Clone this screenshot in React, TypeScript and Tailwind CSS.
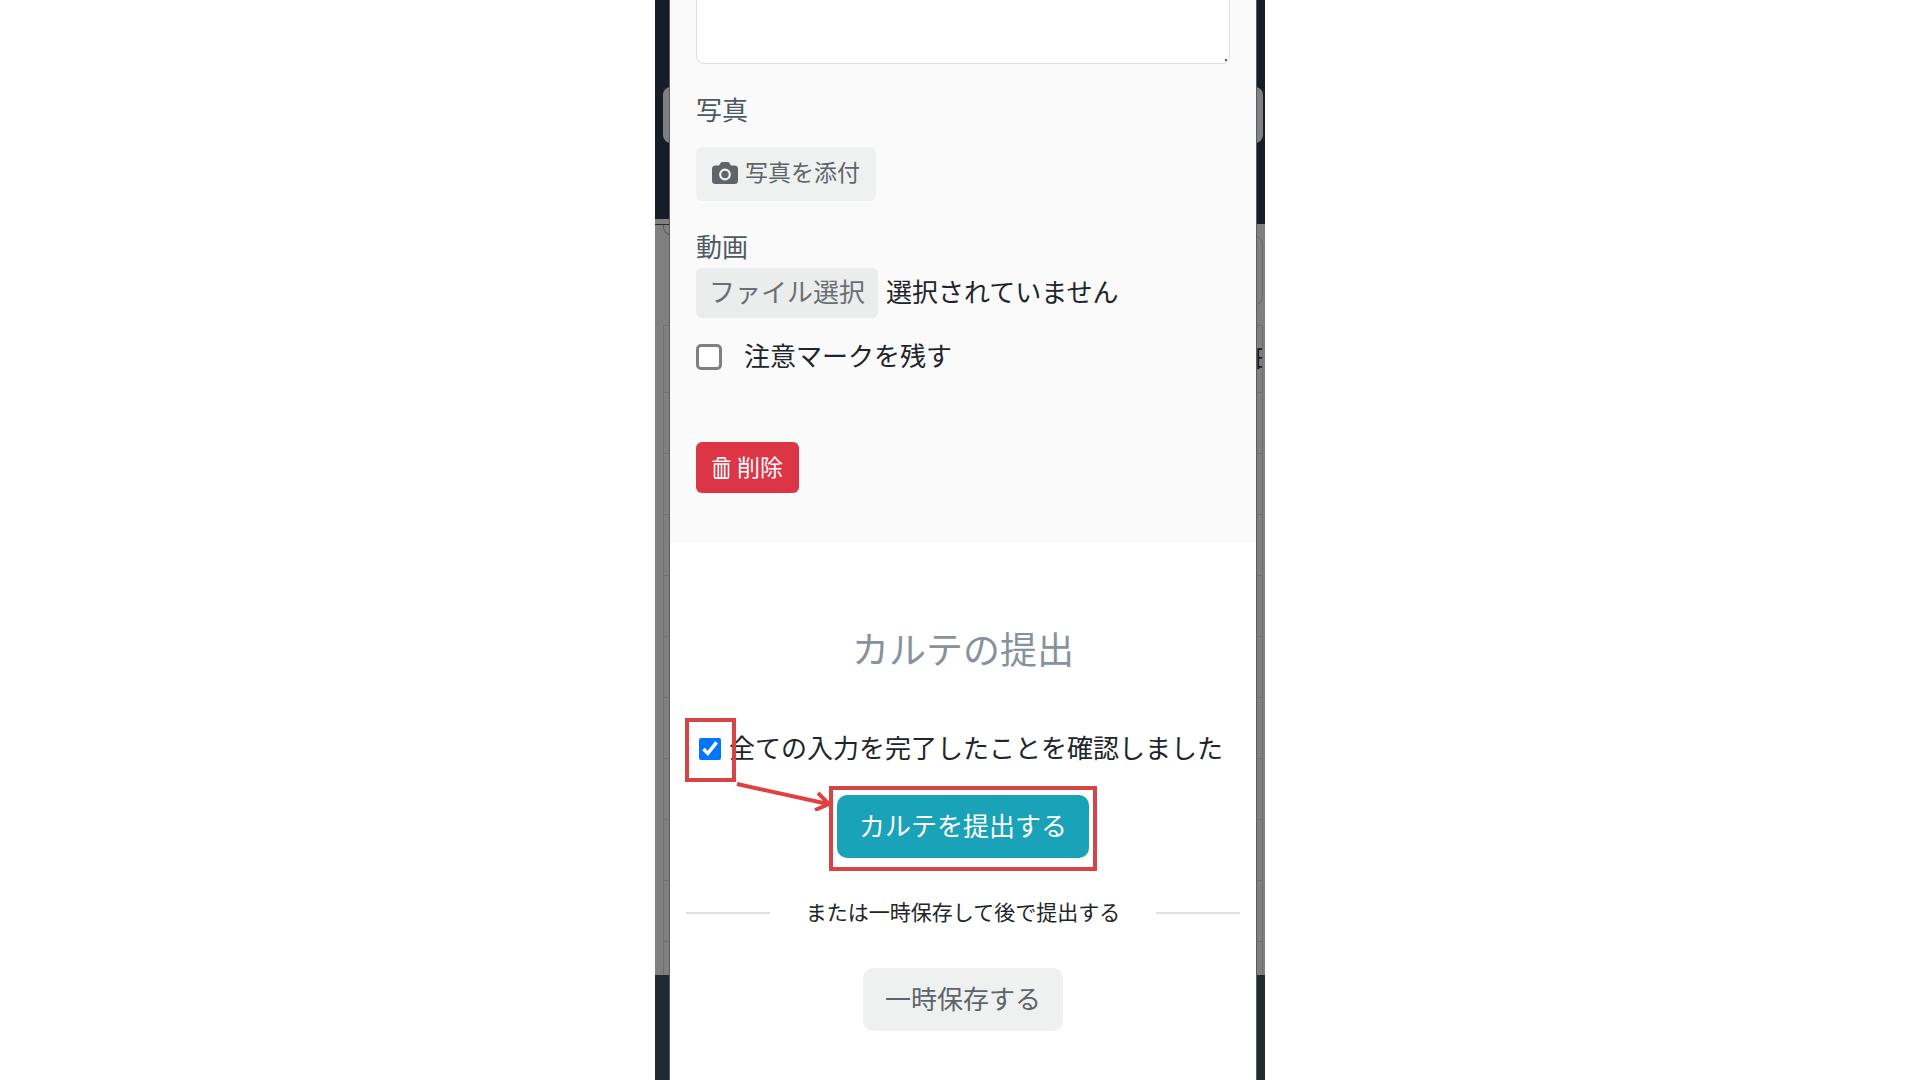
// カルテ提出モーダル (写真・動画添付 → 確認 → 提出)
import { useState } from 'react';
import type { ReactNode } from 'react';

const ROWS = ['日', '', '', '', '', '', '', '', '', ''];

// モーダルの後ろに見える暗転したページ
function DimmedPage() {
  return (
    <div aria-hidden="true" className="absolute inset-0 flex flex-col overflow-hidden bg-[#808080]">
      <div className="flex h-[224px] shrink-0 flex-col justify-between bg-[#161d29] pt-[87px]">
        <div className="ml-2 mr-[2px] h-14 rounded-lg bg-[#808084]" />
        <div className="h-[5px] w-1/2 bg-[#808080]" />
      </div>
      <div className="h-[751px] shrink-0 pr-[2px]">
        <div className="flex h-[101px]">
          <div className="w-1/2 border-t border-[#2a2a2a] pl-2">
            <div className="h-[10px] rounded-bl-lg border-b border-l border-[#5a5a5a]" />
          </div>
          <div className="mt-3 h-[69px] w-1/2 rounded-r-lg border border-[#6c6c6c]" />
        </div>
        <div className="ml-2 h-[650px] border border-b-0 border-[#6f6f6f]">
          {ROWS.map((label, i) => (
            <div key={i} className="flex h-[61px] items-center justify-end border-b border-[#6f6f6f] first:h-[67px]">
              <span className="w-[9px] overflow-hidden text-2xl text-[#1c1c1c]">{label}</span>
            </div>
          ))}
        </div>
      </div>
      <div className="grow bg-[#1f2a32]" />
    </div>
  );
}

function CameraIcon() {
  return (
    <svg viewBox="0 0 26 22" className="h-[22px] w-[26px]" fill="none" aria-hidden="true">
      <path
        d="M3.5 3.5h3.6l1.300-2.200A2.400 2.400 0 0 1 10.500 0h5a2.400 2.400 0 0 1 2.100 1.300l1.300 2.200h3.600A3.500 3.500 0 0 1 26 7v11.500a3.500 3.500 0 0 1-3.500 3.500h-19A3.500 3.500 0 0 1 0 18.500V7a3.500 3.500 0 0 1 3.500-3.500z"
        fill="#5f6469"
      />
      <circle cx="13" cy="12.500" r="4.800" stroke="#eff1f1" strokeWidth="2.200" />
    </svg>
  );
}

function TrashIcon() {
  return (
    <svg viewBox="0 0 19 22" className="h-[22px] w-[19px]" fill="none" stroke="currentColor" strokeWidth="1.600" aria-hidden="true">
      <path d="M.5 4.300h18M5.500 4V1.800q0-.9.900-.9h6.200q.9 0 .9.900V4M2.500 7v13q0 1.100 1.100 1.100h11.800q1.100 0 1.100-1.100V7zM6.300 7v14M9.500 7v14M12.700 7v14" />
    </svg>
  );
}

function Divider({ children }: { children: ReactNode }) {
  return (
    <div className="flex items-center">
      <span className="h-[2px] grow bg-[#dfe1e2]" />
      <p className="px-9 text-[21px] leading-8 text-[#212529]">{children}</p>
      <span className="h-[2px] grow bg-[#dfe1e2]" />
    </div>
  );
}

export default function App() {
  const [caution, setCaution] = useState(false);
  const [confirmed, setConfirmed] = useState(true);

  return (
    <div className="min-h-screen bg-white font-['Liberation_Sans','Noto_Sans_CJK_JP',sans-serif] text-[26px] leading-9 text-[#212529]">
      <div className="relative mx-auto flex min-h-screen w-full max-w-[610px] pl-[15px] pr-[9px]">
        <DimmedPage />

        <main className="relative flex min-w-0 grow flex-col bg-white shadow-[0_0_0_1px_#5c5c5c]">
          <section className="bg-[#fafafa] px-[26px] pb-[50px]">
            <div className="relative">
              <textarea
                aria-label="メモ"
                className="block h-16 w-full resize-none rounded-b-lg border border-t-0 border-[#dee0e2] bg-white"
              />
              <span className="pointer-events-none absolute bottom-[3px] right-[3px] size-[2px] bg-[#55585c]" />
            </div>

            <h2 className="mt-[29px] text-[#4f5964]">写真</h2>
            <button type="button" className="mt-[18px] flex h-[54px] items-center gap-[7px] rounded-md bg-[#eff1f1] px-4 pb-[2px] text-[23px] text-[#5f6469]">
              <CameraIcon />
              写真を添付
            </button>

            <h2 className="mt-[29px] text-[#4f5964]">動画</h2>
            <label className="mt-[2px] flex items-center gap-2">
              <input type="file" accept="video/*" className="sr-only" />
              <span className="flex h-[50px] items-center rounded-md bg-[#ebeded] px-[13px] text-[#6a6f73]">ファイル選択</span>
              <span>選択されていません</span>
            </label>

            <label className="mt-[21px] flex items-center gap-[22px]">
              <input
                type="checkbox"
                checked={caution}
                onChange={(e) => setCaution(e.target.checked)}
                className="size-[26px] appearance-none rounded-[5px] border-3 border-[#808080] bg-white checked:bg-[#0075ff]"
              />
              注意マークを残す
            </label>

            <button type="button" className="mt-[67px] flex h-[51px] items-center gap-[6px] rounded-md bg-[#dc3545] px-4 text-[23px] text-white">
              <TrashIcon />
              削除
            </button>
          </section>

          <section className="flex flex-col px-4 pt-[82px]">
            <h1 className="text-center text-[37px] leading-[54px] text-[#87929c]">カルテの提出</h1>

            <label className="ml-[13px] mt-[52px] flex items-center gap-2 whitespace-nowrap">
              <input
                type="checkbox"
                checked={confirmed}
                onChange={(e) => setConfirmed(e.target.checked)}
                className="size-[22px] accent-[#0075ff]"
              />
              <span>全ての入力を完了したことを確認しました</span>
            </label>

            <div className="relative mx-auto mt-7">
              <button type="button" className="block h-[63px] rounded-[10px] bg-[#1aa2b8] px-[22px] text-white">
                カルテを提出する
              </button>
              {/* 操作手順のハイライト */}
              <span className="pointer-events-none absolute -inset-x-2 -bottom-[13px] -top-[9px] border-4 border-[#d64545]" />
              <span className="pointer-events-none absolute -left-[152px] -top-[77px] h-16 w-[51px] border-4 border-[#d64545]" />
              <svg
                viewBox="0 0 94 30"
                className="pointer-events-none absolute -left-[101px] -top-[14px] h-[30px] w-[94px]"
                fill="none"
                stroke="#e04040"
                strokeWidth="4"
                aria-hidden="true"
              >
                <path d="M1 3l91 20" />
                <path d="M82 12l11 11-14 6" strokeLinejoin="round" />
              </svg>
            </div>

            <div className="mt-[39px]">
              <Divider>または一時保存して後で提出する</Divider>
            </div>

            <button type="button" className="mx-auto mt-[39px] h-[63px] rounded-[10px] bg-[#eff1f1] px-[22px] text-[#5f6469]">
              一時保存する
            </button>
          </section>
        </main>
      </div>
    </div>
  );
}
